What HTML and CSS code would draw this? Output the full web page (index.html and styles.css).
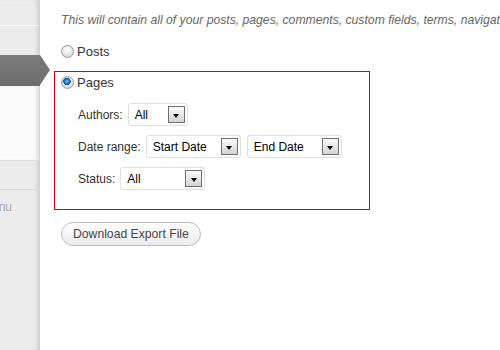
FILE: index.html
```html
<!DOCTYPE html>
<html lang="en">
<head>
    <meta charset="UTF-8">
    <meta name="viewport" content="width=device-width, initial-scale=1.0">
    <title>Export</title>
    <link rel="stylesheet" href="styles.css">
</head>
<body>

<div class="page">
    <div class="sidebar">
        <div class="side-top"></div>
        <div class="side-block"></div>
        <div class="side-current"></div>
        <div class="side-white"></div>
        <div class="side-row"></div>
        <div class="side-rest"><span class="side-label">Menu</span></div>
    </div>

    <div class="main">
        <p class="desc">This will contain all of your posts, pages, comments, custom fields, terms, navigation menus and custom posts.</p>

        <div class="choice">
            <span class="radio"></span>
            <span>Posts</span>
        </div>

        <div class="highlight">
            <div class="choice">
                <span class="radio checked"></span>
                <span>Pages</span>
            </div>

            <div class="filters">
                <div class="filter-row">
                    <span class="filter-label">Authors:</span>
                    <span class="select w-authors"><span>All</span><span class="arrow"></span></span>
                </div>
                <div class="filter-row">
                    <span class="filter-label">Date range:</span>
                    <span class="select w-date"><span>Start Date</span><span class="arrow"></span></span>
                    <span class="select w-date"><span>End Date</span><span class="arrow"></span></span>
                </div>
                <div class="filter-row">
                    <span class="filter-label">Status:</span>
                    <span class="select w-status"><span>All</span><span class="arrow"></span></span>
                </div>
            </div>
        </div>

        <button class="export-btn">Download Export File</button>
    </div>
</div>

</body>
</html>
```

FILE: styles.css
```css
body {
    margin: 0;
    font-family: "Liberation Sans", Arial, sans-serif;
    font-size: 13px;
    color: #333;
    background: #fff;
}
.page {
    display: flex;
    height: 350px;
    overflow: hidden;
}

/* left admin menu */
.sidebar {
    width: 40px;
    flex-shrink: 0;
    display: flex;
    flex-direction: column;
    background: #ececec;
    box-shadow: inset -4px 0 4px -2px rgba(0, 0, 0, 0.12);
    border-right: 1px solid #d2d2d2;
    box-sizing: border-box;
    position: relative;
}
.side-top {
    height: 25px;
    border-bottom: 1px solid #f8f8f8;
}
.side-block {
    height: 29px;
}
.side-current {
    height: 31px;
    margin-right: -1px;
    background: linear-gradient(#7d7d7d, #6c6c6c);
    position: relative;
}
.side-current::after {
    content: "";
    position: absolute;
    right: -10px;
    top: 0;
    border-top: 15.5px solid transparent;
    border-bottom: 15.5px solid transparent;
    border-left: 10px solid #747474;
}
.side-white {
    height: 74px;
    background: #fafafa;
    box-shadow: inset -4px 0 4px -2px rgba(0, 0, 0, 0.12);
}
.side-row {
    height: 28px;
    border-top: 1px solid #dcdcdc;
    border-bottom: 1px solid #dcdcdc;
}
.side-rest {
    flex: 1;
    overflow: hidden;
    padding-top: 10px;
}
.side-label {
    display: block;
    margin-left: -18px;
    color: #aaa;
    font-size: 12px;
}

/* main content */
.main {
    flex: 1;
    padding: 12px 0 0 21px;
    min-width: 0;
}
.desc {
    margin: 0 0 14px;
    font-style: italic;
    font-size: 12.2px;
    color: #666;
    white-space: nowrap;
    line-height: 16px;
}
.choice {
    display: flex;
    align-items: center;
    gap: 3px;
    height: 18px;
}
.radio {
    width: 11px;
    height: 11px;
    border: 1px solid #9a9a9a;
    border-radius: 50%;
    background: radial-gradient(circle at 50% 35%, #fdfdfd, #d2d2d2);
}
.radio.checked {
    background:
        radial-gradient(circle at 45% 40%, #7ec3f5 0, #1a6fc4 2.5px, #0d4d94 3.5px, transparent 4px),
        radial-gradient(circle at 50% 35%, #fdfdfd, #d2d2d2);
}

.highlight {
    margin: 11px 0 0 -7px;
    width: 316px;
    box-sizing: border-box;
    border: 1px solid #e00000;
    padding: 1px 6px 19px;
}
.filters {
    padding: 12px 0 0 17px;
    display: flex;
    flex-direction: column;
    gap: 9px;
    font-size: 12px;
}
.filter-row {
    display: flex;
    align-items: center;
    gap: 5px;
}
.filter-label {
    color: #333;
}
.select {
    display: flex;
    align-items: center;
    justify-content: space-between;
    height: 23px;
    box-sizing: border-box;
    border: 1px solid #dfdfdf;
    border-radius: 3px;
    background: #fff;
    padding: 0 2px 0 6px;
    color: #000;
}
.select + .select {
    margin-left: 1px;
}
.w-authors { width: 60px; }
.w-date { width: 95px; }
.w-status { width: 85px; }
.arrow {
    width: 17px;
    height: 17px;
    box-sizing: border-box;
    border: 1px solid #6f6f6f;
    background: linear-gradient(#fafafa, #d4d4d4);
    display: flex;
    align-items: center;
    justify-content: center;
}
.arrow::after {
    content: "";
    border-left: 3.5px solid transparent;
    border-right: 3.5px solid transparent;
    border-top: 4px solid #000;
    margin-top: 2px;
}

.export-btn {
    margin-top: 12px;
    height: 24px;
    padding: 0 11px;
    border: 1px solid #bbb;
    border-radius: 12px;
    background: linear-gradient(#fff, #ececec);
    color: #464646;
    font-family: inherit;
    font-size: 12.2px;
    cursor: pointer;
}
```
